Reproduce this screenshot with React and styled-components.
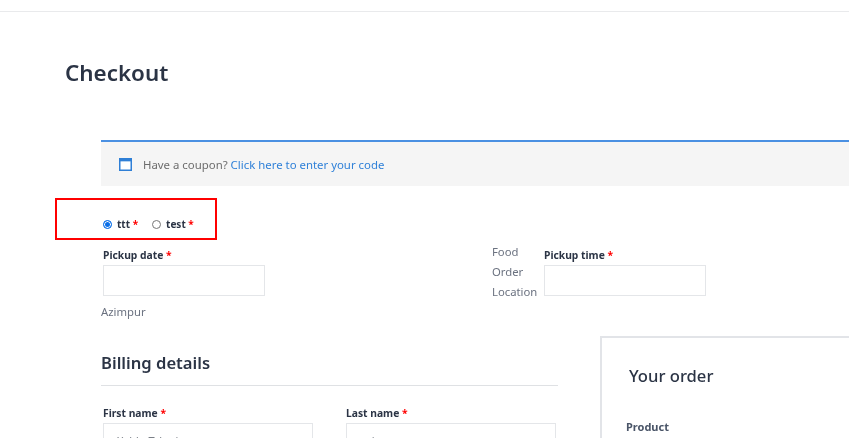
import React from "react";
import styled,{createGlobalStyle} from "styled-components";

const Global=createGlobalStyle`
  html,body{
    margin:0;
    padding:0;
    background:#fff;
    overflow:hidden;
  }
  body{
    font-family:"Noto Sans","Open Sans",sans-serif;
    color:#6b7280;
  }
`;

const Page=styled.div`
  position:relative;
  width:849px;
  height:438px;
  overflow:hidden;
  filter:blur(0.3px);
`;

const TopBar=styled.div`
  height:11px;
  border-bottom:1px solid #e9eaec;
`;

const Title=styled.h1`
  margin:0;
  padding:44px 0 0 65px;
  height:84px;
  font-size:22.4px;
  line-height:34px;
  font-weight:600;
  color:#2b3445;
`;

const Content=styled.div`
  width:900px;
  margin-left:101px;
`;

const Notice=styled.div`
  display:flex;
  align-items:center;
  gap:11px;
  height:44px;
  padding-left:18px;
  border-top:2px solid #4a90e2;
  background:#f5f5f5;
  font-size:11.4px;
  color:#6d6d6d;
  a{
    color:#2f80d8;
    text-decoration:none;
  }
`;

const RadioRow=styled.div`
  display:flex;
  align-items:center;
  height:18px;
  margin:29px 0 0 2px;
`;

const RadioDot=styled.span`
  box-sizing:border-box;
  width:9px;
  height:9px;
  border-radius:50%;
  margin-right:5px;
  border:1px solid ${(props)=>props.checked?"#0b6fe8":"#767676"};
  background:${(props)=>props.checked?"#0b6fe8":"#fff"};
  box-shadow:${(props)=>props.checked?"inset 0 0 0 1px #fff":"none"};
`;

const RadioLabel=styled.span`
  font-size:10px;
  font-weight:700;
  color:#2b3445;
  margin-right:${(props)=>props.gap||0}px;
`;

const Req=styled.span`
  color:#f00;
  font-weight:700;
`;

const PickupRow=styled.div`
  display:flex;
  margin-top:15px;
`;

const Column=styled.div`
  display:flex;
  flex-direction:column;
  width:${(props)=>props.width}px;
`;

const FieldLabel=styled.label`
  display:block;
  font-size:10.3px;
  line-height:14px;
  font-weight:700;
  color:#2b3445;
  margin-left:${(props)=>props.indent||0}px;
`;

const Input=styled.div`
  box-sizing:border-box;
  width:${(props)=>props.width}px;
  height:${(props)=>props.height||31}px;
  margin:3px 0 0 ${(props)=>props.indent||0}px;
  border:1px solid #e4e6e9;
  background:#fff;
  font-size:11px;
  line-height:34px;
  padding-left:13px;
  color:#7a7f87;
`;

const Location=styled.div`
  font-size:11.3px;
  line-height:20px;
  color:#6b7280;
  margin-top:6px;
`;

const FoodLabel=styled.div`
  width:52px;
  margin-top:-6px;
  font-size:11.3px;
  line-height:20px;
  color:#6b7280;
`;

const Lower=styled.div`
  display:flex;
  margin-top:14px;
`;

const Billing=styled.div`
  width:457px;
  padding-top:15px;
  margin-right:42px;
`;

const BillingTitle=styled.h3`
  margin:0;
  padding-bottom:10px;
  font-size:16.6px;
  line-height:24px;
  font-weight:600;
  color:#2b3445;
  border-bottom:1px solid #dfe1e4;
`;

const NameRow=styled.div`
  display:flex;
  gap:33px;
  margin:20px 0 0 2px;
`;

const OrderBox=styled.div`
  flex:1;
  height:140px;
  padding:26px 0 0 27px;
  border:solid #e2e4e8;
  border-width:2px 0 0 2px;
`;

const OrderTitle=styled.h3`
  margin:0;
  font-size:16.6px;
  line-height:24px;
  font-weight:500;
  color:#2b3445;
`;

const ProductHead=styled.div`
  margin:31px 0 0 -3px;
  font-size:11px;
  font-weight:700;
  line-height:16px;
  color:#4a5568;
`;

const Highlight=styled.div`
  position:absolute;
  left:55px;
  top:198px;
  width:162px;
  height:42px;
  box-sizing:border-box;
  border:2.5px solid #f00;
`;

function App(){
  return(
    <>
    <Global/>
    <Page>
      <TopBar/>
      <Title>Checkout</Title>
      <Content>
        <Notice>
          <svg width="13" height="13" viewBox="0 0 13 13">
            <rect x="0.75" y="0.75" width="11.5" height="11.5" fill="#fff" stroke="#2f7fd6" strokeWidth="1.5"/>
            <rect x="0.75" y="0.75" width="11.5" height="2.6" fill="#2f7fd6"/>
          </svg>
          <span>Have a coupon? <a href="#coupon">Click here to enter your code</a></span>
        </Notice>
        <RadioRow>
          <RadioDot checked/>
          <RadioLabel gap={14}>ttt <Req>*</Req></RadioLabel>
          <RadioDot/>
          <RadioLabel>test <Req>*</Req></RadioLabel>
        </RadioRow>
        <PickupRow>
          <Column width={391}>
            <FieldLabel indent={2}>Pickup date <Req>*</Req></FieldLabel>
            <Input width={162} indent={2}/>
            <Location>Azimpur</Location>
          </Column>
          <FoodLabel>Food Order Location</FoodLabel>
          <Column width={170}>
            <FieldLabel>Pickup time <Req>*</Req></FieldLabel>
            <Input width={162}/>
          </Column>
        </PickupRow>
        <Lower>
          <Billing>
            <BillingTitle>Billing details</BillingTitle>
            <NameRow>
              <Column width={210}>
                <FieldLabel>First name <Req>*</Req></FieldLabel>
                <Input width={210} height={40}>Xxldo Tzlogi</Input>
              </Column>
              <Column width={210}>
                <FieldLabel>Last name <Req>*</Req></FieldLabel>
                <Input width={210} height={40}>xxiox</Input>
              </Column>
            </NameRow>
          </Billing>
          <OrderBox>
            <OrderTitle>Your order</OrderTitle>
            <ProductHead>Product</ProductHead>
          </OrderBox>
        </Lower>
      </Content>
      <Highlight/>
    </Page>
    </>
  );
}

export default App;
